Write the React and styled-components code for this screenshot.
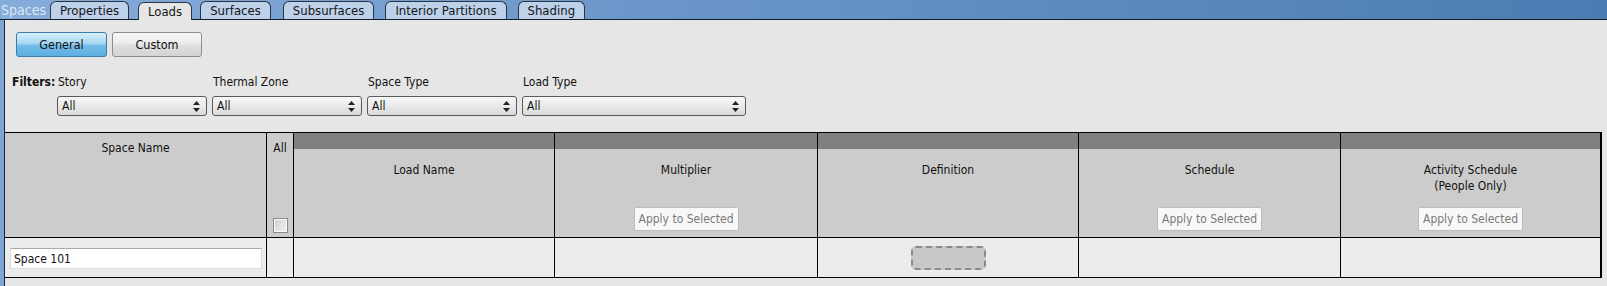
import React from "react"
import styled, { createGlobalStyle } from "styled-components"

const GlobalStyle = createGlobalStyle`
    html, body {
        margin: 0;
        padding: 0;
        background: #ececec;
    }
    body {
        font-family: "DejaVu Sans Condensed", "DejaVu Sans", sans-serif;
        font-size: 12px;
        color: #111;
    }
`

const Window = styled.div`
    width: 1607px;
    height: 286px;
    display: flex;
    flex-direction: column;
    background: #7ea5d6;
    overflow: hidden;
`

const TabBar = styled.div`
    height: 19px;
    display: flex;
    align-items: flex-end;
    background: linear-gradient(to right, #86acdb 0%, #6f98cb 35%, #5887bb 75%, #4b7db2 100%);
    border-bottom: 1px solid #0e1c2c;
`

const BarTitle = styled.span`
    align-self: center;
    padding: 0 3px 0 1px;
    font-size: 14px;
    color: #dce8f6;
    margin-right: 1px;
`

const Tab = styled.div`
    height: 18px;
    box-sizing: border-box;
    padding: 0 9px;
    margin-right: ${(p) => p.gap}px;
    display: flex;
    align-items: center;
    border: 1px solid #2c3440;
    border-bottom: none;
    border-radius: 6px 6px 0 0;
    background: ${(p) => (p.active ? "#e6e6e6" : "#bdd1ea")};
    font-size: 13px;
    color: #151515;
    position: relative;
    top: ${(p) => (p.active ? "1px" : "0")};
`

const Pane = styled.div`
    flex: 1;
    margin-left: 4px;
    border-left: 1px solid #1b2734;
    background: #e6e6e6;
    display: flex;
    flex-direction: column;
    padding-top: 12px;
`

const Toolbar = styled.div`
    display: flex;
    gap: 5px;
    padding-left: 11px;
`

const ModeButton = styled.div`
    width: ${(p) => p.w}px;
    height: 25px;
    box-sizing: border-box;
    display: flex;
    align-items: center;
    justify-content: center;
    border-radius: 3px;
    font-size: 12.5px;
    border: 1px solid ${(p) => (p.active ? "#3d7bab" : "#8d8d8d")};
    background: ${(p) =>
        p.active
            ? "linear-gradient(to bottom, #d6effb 0%, #a8d8f3 45%, #72bde8 55%, #5caee0 100%)"
            : "linear-gradient(to bottom, #f6f6f6 0%, #ececec 45%, #dedede 55%, #d4d4d4 100%)"};
`

const FilterRow = styled.div`
    display: flex;
    padding-left: 7px;
    margin-top: 18px;
`

const FiltersLabel = styled.span`
    font-weight: bold;
    width: 45px;
    line-height: 15px;
`

const FilterGroup = styled.div`
    display: flex;
    flex-direction: column;
    gap: 6px;
    margin-right: 5px;
`

const FilterLabel = styled.span`
    line-height: 15px;
    padding-left: 1px;
`

const Select = styled.div`
    width: ${(p) => p.w}px;
    height: 20px;
    box-sizing: border-box;
    border: 1px solid #5a5a5a;
    border-radius: 3px;
    background: linear-gradient(to bottom, #f7f7f7 0%, #e9e9e9 50%, #d9d9d9 100%);
    display: flex;
    align-items: center;
    justify-content: space-between;
    padding: 0 6px 0 4px;
`

const Table = styled.div`
    margin-top: 16px;
    width: 1596px;
    display: grid;
    grid-template-columns: 261px 26px 260px 262px 260px 261px 259px;
    grid-template-rows: 104px 39px;
    gap: 1px;
    padding: 1px 1px 1px 0;
    background: #000;
`

const HeadCell = styled.div`
    background: #cccccc;
    display: flex;
    flex-direction: column;
    align-items: center;
    padding-bottom: ${(p) => p.pb || 6}px;
`

const Band = styled.div`
    height: 16px;
    align-self: stretch;
    background: #808080;
`

const HeadTitle = styled.div`
    text-align: center;
    line-height: 16px;
    padding-top: ${(p) => p.pt}px;
`

const ApplyButton = styled.div`
    margin-top: auto;
    width: 105px;
    height: 24px;
    box-sizing: border-box;
    display: flex;
    align-items: center;
    justify-content: center;
    background: #f8f8f8;
    border: 1px solid #bdbdbd;
    border-radius: 2px;
    color: #7a7a7a;
`

const Checkbox = styled.div`
    margin-top: auto;
    width: 15px;
    height: 15px;
    box-sizing: border-box;
    border: 1px solid #8a8a8a;
    background: linear-gradient(135deg, #d0d0d0 0%, #f2f2f2 100%);
    box-shadow: inset 0 0 0 1px #fafafa;
`

const BodyCell = styled.div`
    background: #ececec;
    display: flex;
    align-items: center;
    justify-content: ${(p) => (p.center ? "center" : "flex-start")};
`

const TextInput = styled.div`
    margin-left: 5px;
    width: 252px;
    height: 21px;
    box-sizing: border-box;
    background: #fff;
    border: 1px solid #dcdcdc;
    border-top-color: #a9a9a9;
    display: flex;
    align-items: center;
    padding-left: 3px;
    margin-top: 2px;
`

const DropZone = styled.div`
    width: 75px;
    height: 24px;
    box-sizing: border-box;
    border: 2px dashed #8a8a8a;
    border-radius: 5px;
    background: #c8c8c8;
`

const Arrows = () => (
    <svg width="7" height="11" viewBox="0 0 7 11">
        <path d="M3.5 0 L7 4 L0 4 Z" fill="#222" />
        <path d="M3.5 11 L7 7 L0 7 Z" fill="#222" />
    </svg>
)

const tabs = [
    { name: "Properties", gap: 9 },
    { name: "Loads", gap: 8, active: true },
    { name: "Surfaces", gap: 12 },
    { name: "Subsurfaces", gap: 11 },
    { name: "Interior Partitions", gap: 11 },
    { name: "Shading", gap: 0 },
]

const filters = [
    { label: "Story", w: 150 },
    { label: "Thermal Zone", w: 150 },
    { label: "Space Type", w: 150 },
    { label: "Load Type", w: 224 },
]

const loadColumns = [
    { title: "Load Name" },
    { title: "Multiplier", apply: true },
    { title: "Definition" },
    { title: "Schedule", apply: true },
    { title: ["Activity Schedule", "(People Only)"], apply: true },
]

export default () => (
    <Window>
        <GlobalStyle />
        <TabBar>
            <BarTitle>Spaces</BarTitle>
            {tabs.map((t) => (
                <Tab key={t.name} gap={t.gap} active={t.active}>
                    {t.name}
                </Tab>
            ))}
        </TabBar>
        <Pane>
            <Toolbar>
                <ModeButton w={91} active>
                    General
                </ModeButton>
                <ModeButton w={90}>Custom</ModeButton>
            </Toolbar>
            <FilterRow>
                <FiltersLabel>Filters:</FiltersLabel>
                {filters.map((f) => (
                    <FilterGroup key={f.label}>
                        <FilterLabel>{f.label}</FilterLabel>
                        <Select w={f.w}>
                            All
                            <Arrows />
                        </Select>
                    </FilterGroup>
                ))}
            </FilterRow>
            <Table>
                <HeadCell>
                    <HeadTitle pt={7}>Space Name</HeadTitle>
                </HeadCell>
                <HeadCell pb={4}>
                    <HeadTitle pt={7}>All</HeadTitle>
                    <Checkbox />
                </HeadCell>
                {loadColumns.map((c, i) => (
                    <HeadCell key={i}>
                        <Band />
                        <HeadTitle pt={13}>
                            {Array.isArray(c.title)
                                ? c.title.map((l) => <div key={l}>{l}</div>)
                                : c.title}
                        </HeadTitle>
                        {c.apply && <ApplyButton>Apply to Selected</ApplyButton>}
                    </HeadCell>
                ))}
                <BodyCell>
                    <TextInput>Space 101</TextInput>
                </BodyCell>
                <BodyCell />
                <BodyCell />
                <BodyCell />
                <BodyCell center>
                    <DropZone />
                </BodyCell>
                <BodyCell />
                <BodyCell />
            </Table>
        </Pane>
    </Window>
)
